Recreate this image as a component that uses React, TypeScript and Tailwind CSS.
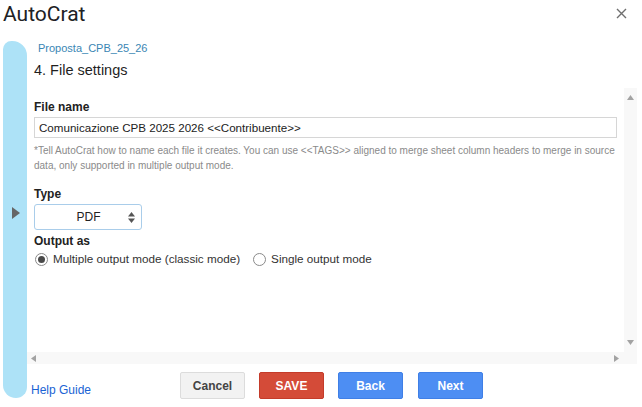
import React from "react";

function Tri({ dir }: { dir: "up" | "down" | "left" | "right" }) {
  const pts = {
    up: "0,5 3.5,0 7,5",
    down: "0,0 7,0 3.5,5",
    left: "5,0 5,7 0,3.5",
    right: "0,0 5,3.5 0,7",
  }[dir];
  const vert = dir === "up" || dir === "down";
  return (
    <svg width={vert ? 7 : 5} height={vert ? 5 : 7} viewBox={vert ? "0 0 7 5" : "0 0 5 7"}>
      <polygon points={pts} fill="#a3a3a3" />
    </svg>
  );
}

function Radio({ checked, label }: { checked?: boolean; label: string }) {
  return (
    <label className="flex items-center gap-[5px]">
      <span className="w-[13px] h-[13px] rounded-full border border-[#8a8a8a] bg-white flex items-center justify-center">
        {checked && <span className="w-[7px] h-[7px] rounded-full bg-[#4a4a4a]" />}
      </span>
      <span>{label}</span>
    </label>
  );
}

export default function App() {
  return (
    <div
      className="w-[642px] h-[407px] bg-white overflow-hidden text-[#222]"
      style={{ fontFamily: '"Liberation Sans", Arial, sans-serif' }}
    >
      {/* header */}
      <div className="h-[29px] flex items-center justify-between pl-[3px] pr-[15px]">
        <span
          className="text-[21px] leading-[29px] text-[#202124]"
          style={{ fontFamily: "Roboto, sans-serif" }}
        >
          AutoCrat
        </span>
        <svg width="11" height="11" viewBox="0 0 11 11" className="mt-[-3px]">
          <path d="M1 1 L10 10 M10 1 L1 10" stroke="#6f6f6f" strokeWidth="1.4" />
        </svg>
      </div>

      <div className="flex mt-[12px]">
        {/* side bar */}
        <div className="ml-[3px] w-[24px] h-[357px] bg-[#ade2f7] rounded-tl-[9px] rounded-tr-[16px] rounded-bl-[14px] rounded-br-[12px] flex items-center justify-center">
          <svg width="8" height="12" viewBox="0 0 8 12" className="mt-[-14px] ml-[1px]">
            <polygon points="0,0 8,6 0,12" fill="#666" />
          </svg>
        </div>

        <div className="w-[610px] flex flex-col">
          <div className="pl-[11px] text-[11px] leading-[14px] text-[#3a86b4]">Proposta_CPB_25_26</div>
          <div className="pl-[7px] mt-[6px] text-[14.5px] leading-[18px] text-[#1f1f1f]">4. File settings</div>

          {/* scroll area */}
          <div className="mt-[9px] flex flex-col">
            <div className="flex h-[264px]">
              <div className="flex-1 pl-[7px] pr-[7px] flex flex-col">
                <div className="mt-[12px] text-[12px] leading-[14px] font-bold">File name</div>
                <div className="mt-[3px] h-[21px] border border-[#d6d6d6] flex items-center pl-[4px] text-[11.6px]">
                  Comunicazione CPB 2025 2026 &lt;&lt;Contribuente&gt;&gt;
                </div>
                <div className="mt-[5px] text-[10px] leading-[15px] text-[#8a8a8a]">
                  *Tell AutoCrat how to name each file it creates. You can use &lt;&lt;TAGS&gt;&gt; aligned to merge
                  sheet column headers to merge in source data, only supported in multiple output mode.
                </div>

                <div className="mt-[14px] text-[12px] leading-[14px] font-bold">Type</div>
                <div className="mt-[3px] w-[108px] h-[26px] border border-[#a9cdea] rounded-[3px] flex items-center text-[12px]">
                  <span className="flex-1 text-center pl-[14px]">PDF</span>
                  <svg width="7" height="11" viewBox="0 0 7 11" className="mr-[6px]">
                    <polygon points="0,4.5 3.5,0 7,4.5" fill="#555" />
                    <polygon points="0,6.5 7,6.5 3.5,11" fill="#555" />
                  </svg>
                </div>

                <div className="mt-[4px] text-[12px] leading-[14px] font-bold">Output as</div>
                <div className="mt-[3px] flex items-center gap-[13px] text-[11.7px] leading-[16px] text-[#333] pl-[1px]">
                  <Radio checked label="Multiple output mode (classic mode)" />
                  <Radio label="Single output mode" />
                </div>
              </div>
              {/* vertical scrollbar */}
              <div className="w-[13px] bg-[#f8f8f8] flex flex-col items-center justify-between py-[7px]">
                <Tri dir="up" />
                <Tri dir="down" />
              </div>
            </div>
            {/* horizontal scrollbar */}
            <div className="flex h-[12px]">
              <div className="flex-1 bg-[#f8f8f8] flex items-center justify-between pl-[4px] pr-[5px]">
                <Tri dir="left" />
                <Tri dir="right" />
              </div>
              <div className="w-[13px] bg-[#f8f8f8]" />
            </div>
          </div>

          {/* footer */}
          <div className="mt-[8px] flex items-end pl-[4px]">
            <span className="w-[149px] text-[12px] leading-[14px] mb-[2px] text-[#1a63d4]">Help Guide</span>
            <div className="flex gap-[14px] text-[12px] font-bold">
              <button className="w-[65px] h-[27px] rounded-[2px] bg-[#f2f2f2] border border-[#dcdcdc] text-[#444]">
                Cancel
              </button>
              <button className="w-[65px] h-[27px] rounded-[2px] bg-[#d44b38] border border-[#c43b2a] text-white">
                SAVE
              </button>
              <button className="w-[65px] h-[27px] rounded-[2px] bg-[#4d8ef3] border border-[#3f7fe6] text-white">
                Back
              </button>
              <button className="ml-[1px] w-[65px] h-[27px] rounded-[2px] bg-[#4d8ef3] border border-[#3f7fe6] text-white">
                Next
              </button>
            </div>
          </div>
        </div>
      </div>
    </div>
  );
}
